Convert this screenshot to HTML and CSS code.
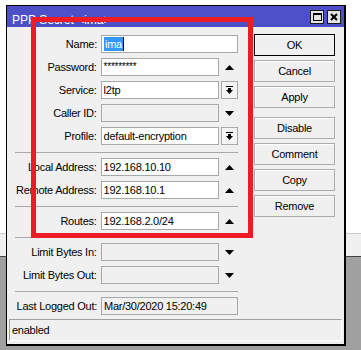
FILE: index.html
```html
<!DOCTYPE html>
<html lang="en">
<head>
    <meta charset="UTF-8">
    <title>PPP Secret &lt;ima&gt;</title>
    <link rel="stylesheet" href="styles.css">
</head>
<body>
    <div class="desk">
        <div class="win">
            <div class="titlebar">
                <span class="title">PPP Secret &lt;ima&gt;</span>
                <div class="tbtns">
                    <span class="tbtn max"><i></i></span>
                    <span class="tbtn close">
                        <svg width="8" height="8" viewBox="0 0 8 8"><path d="M1 1L7 7M7 1L1 7" stroke="#000" stroke-width="2"/></svg>
                    </span>
                </div>
            </div>
            <div class="content">
                <div class="main">
                    <div class="form">
                        <div class="row">
                            <label>Name:</label>
                            <div class="field wide"><span class="sel">ima</span><span class="caret"></span></div>
                        </div>
                        <div class="row">
                            <label>Password:</label>
                            <div class="field pwd">*********</div>
                            <span class="arrow"><svg width="9" height="5"><path d="M0 5H9L4.5 0Z"/></svg></span>
                        </div>
                        <div class="row">
                            <label>Service:</label>
                            <div class="field">l2tp</div>
                            <span class="drop"><svg width="7" height="8"><path d="M0 0H7V1H0ZM2 2H5V4H2ZM0 4H7L3.5 8Z"/></svg></span>
                        </div>
                        <div class="row">
                            <label>Caller ID:</label>
                            <div class="field off"></div>
                            <span class="arrow"><svg width="9" height="5"><path d="M0 0H9L4.5 5Z"/></svg></span>
                        </div>
                        <div class="row">
                            <label>Profile:</label>
                            <div class="field">default-encryption</div>
                            <span class="drop"><svg width="7" height="8"><path d="M0 0H7V1H0ZM2 2H5V4H2ZM0 4H7L3.5 8Z"/></svg></span>
                        </div>
                        <div class="sep"></div>
                        <div class="row">
                            <label>Local Address:</label>
                            <div class="field">192.168.10.10</div>
                            <span class="arrow"><svg width="9" height="5"><path d="M0 5H9L4.5 0Z"/></svg></span>
                        </div>
                        <div class="row">
                            <label>Remote Address:</label>
                            <div class="field">192.168.10.1</div>
                            <span class="arrow"><svg width="9" height="5"><path d="M0 5H9L4.5 0Z"/></svg></span>
                        </div>
                        <div class="sep"></div>
                        <div class="row">
                            <label>Routes:</label>
                            <div class="field">192.168.2.0/24</div>
                            <span class="arrow"><svg width="9" height="5"><path d="M0 5H9L4.5 0Z"/></svg></span>
                        </div>
                        <div class="sep"></div>
                        <div class="row">
                            <label>Limit Bytes In:</label>
                            <div class="field off"></div>
                            <span class="arrow"><svg width="9" height="5"><path d="M0 0H9L4.5 5Z"/></svg></span>
                        </div>
                        <div class="row">
                            <label>Limit Bytes Out:</label>
                            <div class="field off"></div>
                            <span class="arrow"><svg width="9" height="5"><path d="M0 0H9L4.5 5Z"/></svg></span>
                        </div>
                        <div class="sep"></div>
                        <div class="row">
                            <label>Last Logged Out:</label>
                            <div class="field wide off">Mar/30/2020 15:20:49</div>
                        </div>
                    </div>
                    <div class="buttons">
                        <div class="btn default">OK</div>
                        <div class="btn">Cancel</div>
                        <div class="btn">Apply</div>
                        <div class="btn gap">Disable</div>
                        <div class="btn">Comment</div>
                        <div class="btn">Copy</div>
                        <div class="btn">Remove</div>
                    </div>
                </div>
                <div class="status">enabled</div>
            </div>
        </div>
        <div class="mark"></div>
    </div>
</body>
</html>
```

FILE: styles.css
```css
*{
    margin: 0;
    padding: 0;
    box-sizing: border-box;
}
html, body{
    width: 361px;
    height: 350px;
    overflow: hidden;
}
body{
    font-family: "Liberation Sans", Arial, sans-serif;
    font-size: 11px;
    letter-spacing: -0.25px;
    color: #000;
    background: linear-gradient(to bottom, #fff 0, #fff 233px, #c8c8c8 233px, #c8c8c8 234px, #f0f0f0 234px, #f0f0f0 256px, #404040 256px, #404040 257px, #a0a0a0 257px);
}
.desk{
    position: relative;
    height: 350px;
    padding: 5px 0 0 6px;
}
.win{
    width: 340px;
    height: 341px;
    border: 1px solid #000;
    border-right-width: 2px;
    border-bottom-width: 2px;
    background-color: #f0f0f0;
    display: flex;
    flex-direction: column;
}
.titlebar{
    height: 21px;
    background-color: #4d50c7;
    display: flex;
    align-items: center;
    justify-content: space-between;
    padding: 0 3px 0 5px;
}
.title{
    color: #fff;
    font-size: 12px;
    letter-spacing: 0;
    padding-top: 6px;
}
.tbtns{
    display: flex;
    gap: 3px;
}
.tbtn{
    width: 14px;
    height: 14px;
    border: 1px solid #1a1a1a;
    background-color: #e4e4e4;
    display: flex;
    align-items: center;
    justify-content: center;
}
.tbtn.max i{
    width: 9px;
    height: 8px;
    border: 1px solid #000;
    border-top-width: 2px;
}
.content{
    flex: 1;
    display: flex;
    flex-direction: column;
    padding: 8px 2px 3px 2px;
}
.main{
    display: flex;
    gap: 16px;
}
.form{
    width: 231px;
    margin-left: -2px;
    display: flex;
    flex-direction: column;
    gap: 5px;
}
.row{
    display: flex;
    align-items: center;
    height: 18px;
}
.row label{
    width: 90px;
    margin-right: 4px;
    text-align: right;
    white-space: nowrap;
}
.field{
    width: 119px;
    height: 18px;
    border: 1px solid #a8a8a8;
    background-color: #fff;
    padding-left: 2px;
    line-height: 16px;
    white-space: nowrap;
    overflow: hidden;
    display: flex;
    align-items: center;
}
.field.wide{
    width: 137px;
}
.field.off{
    background-color: #f0f0f0;
}
.field.pwd{
    font-size: 10px;
    align-items: flex-start;
}
.sel{
    background-color: #3399ff;
    color: #fff;
    line-height: 14px;
    padding: 0 1px;
}
.caret{
    width: 1px;
    height: 14px;
    background-color: #000;
}
.arrow, .drop{
    width: 17px;
    height: 18px;
    margin-left: 2px;
    display: flex;
    align-items: center;
    justify-content: center;
}
.drop{
    border: 1px solid #a8a8a8;
    background-color: #f4f4f4;
}
.sep{
    height: 1px;
    width: 223px;
    margin: 2px 0 0 8px;
    background-color: #a8a8a8;
}
.buttons{
    width: 81px;
    margin-top: -1px;
    display: flex;
    flex-direction: column;
    gap: 4px;
}
.btn{
    height: 22px;
    border: 1px solid #acacac;
    background-color: #f0f0f0;
    box-shadow: inset 1px 1px 0 #fff;
    display: flex;
    align-items: center;
    justify-content: center;
}
.btn.default{
    border-color: #000;
}
.btn.gap{
    margin-top: 5px;
}
.status{
    margin-top: 4px;
    height: 22px;
    border-top: 1px solid #a0a0a0;
    border-left: 1px solid #a0a0a0;
    border-bottom: 1px solid #fff;
    border-right: 1px solid #fff;
    padding-left: 2px;
    line-height: 21px;
}
.mark{
    position: absolute;
    left: 31px;
    top: 17px;
    width: 222px;
    height: 221px;
    border: 5px solid #ed1c24;
}
```
